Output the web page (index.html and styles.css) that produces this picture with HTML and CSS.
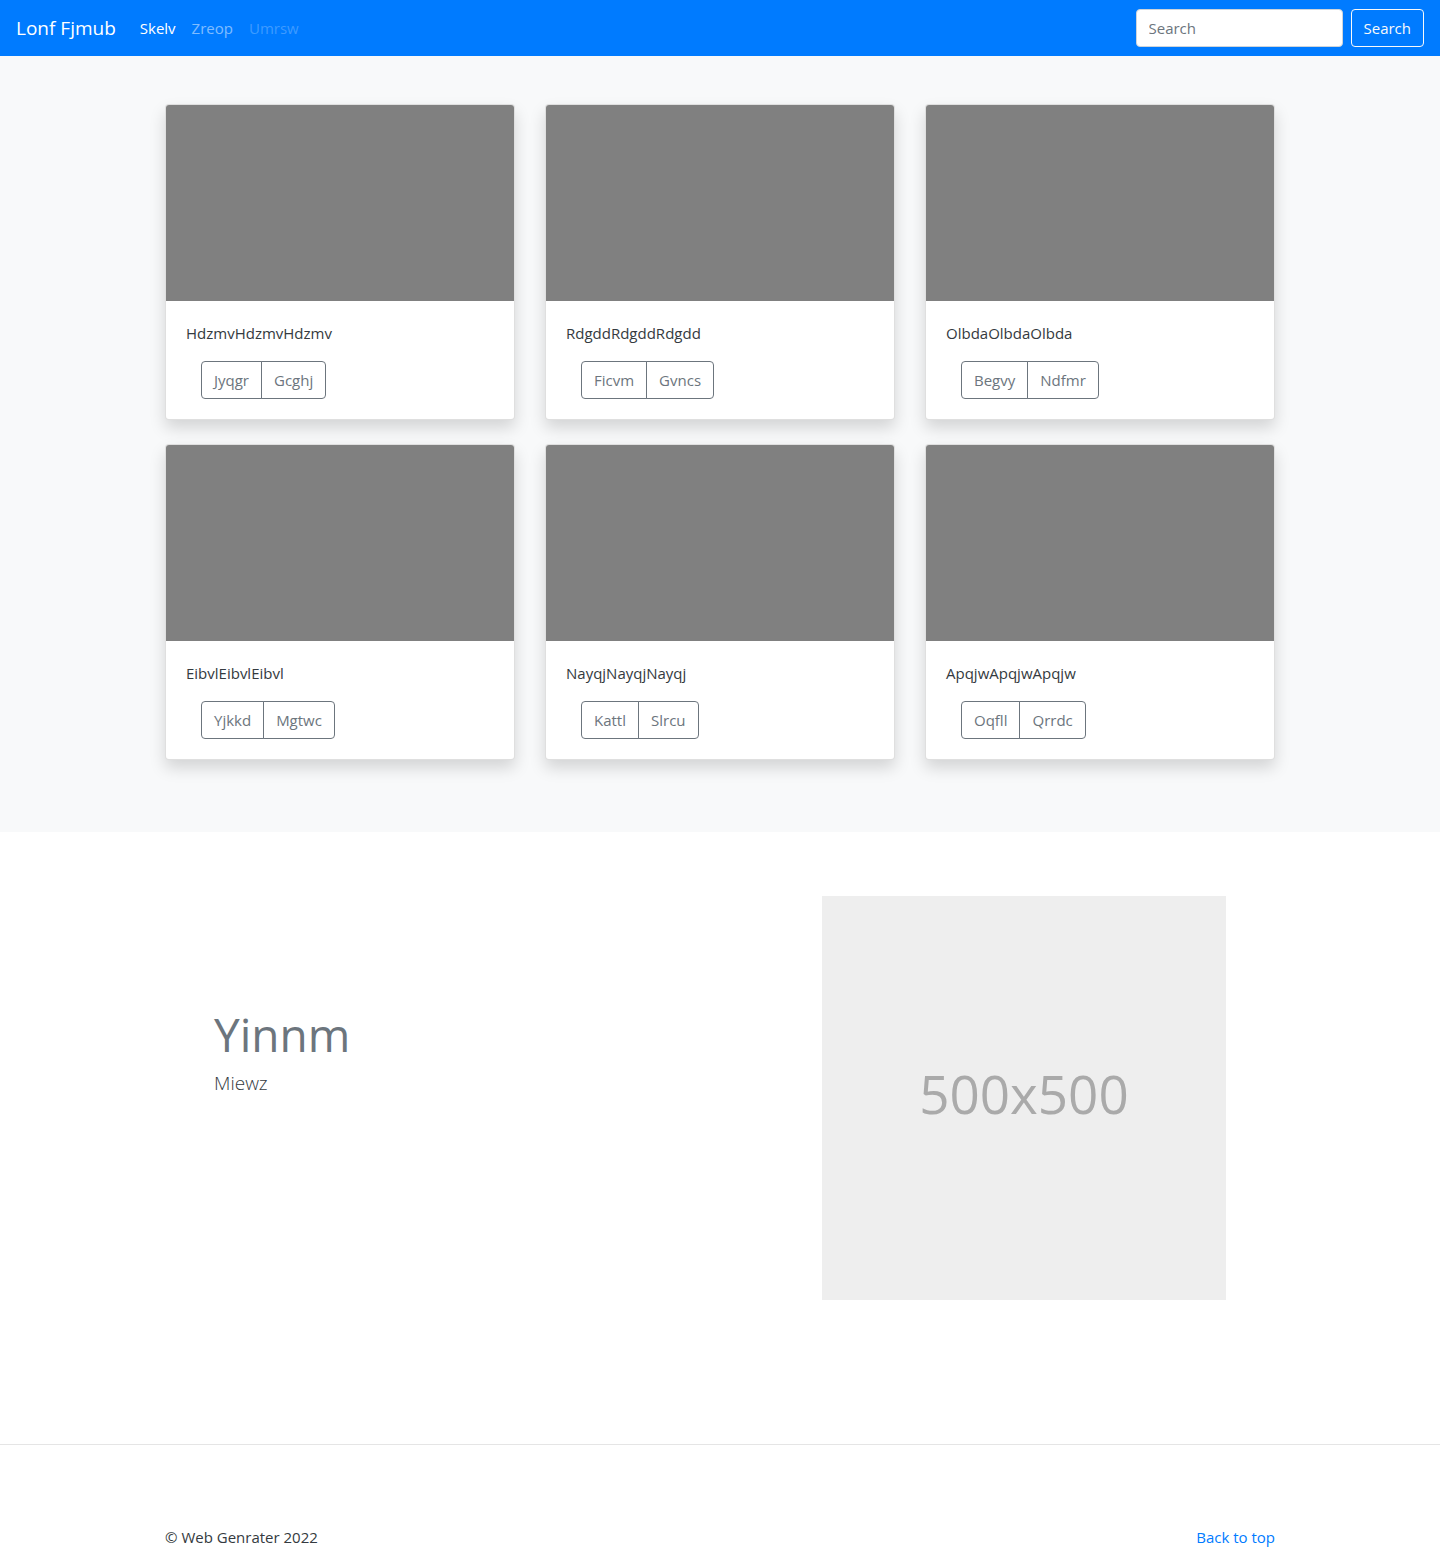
FILE: index.html
```html
<!DOCTYPE html>
<html lang="en">
<head>
<meta charset="utf-8">
<meta name="viewport" content="width=device-width, initial-scale=1">
<title>Lonf Fjmub</title>
<link rel="stylesheet" href="styles.css">
</head>
<body>
<header>
  <nav class="navbar">
    <a class="brand" href="#">Lonf Fjmub</a>
    <ul class="nav-list">
      <li><a class="nav-link active" href="#">Skelv</a></li>
      <li><a class="nav-link" href="#">Zreop</a></li>
      <li><a class="nav-link disabled" href="#" aria-disabled="true">Umrsw</a></li>
    </ul>
    <form class="search">
      <input class="search-input" type="search" placeholder="Search" aria-label="Search">
      <button class="btn btn-light" type="submit">Search</button>
    </form>
  </nav>
</header>
<main>
  <section class="album">
    <div class="container card-grid">
      <article class="card">
        <div class="card-image"></div>
        <div class="card-body">
          <p class="card-text">HdzmvHdzmvHdzmv</p>
          <div class="btn-group"><button class="btn" type="button">Jyqgr</button><button class="btn" type="button">Gcghj</button></div>
        </div>
      </article>
      <article class="card">
        <div class="card-image"></div>
        <div class="card-body">
          <p class="card-text">RdgddRdgddRdgdd</p>
          <div class="btn-group"><button class="btn" type="button">Ficvm</button><button class="btn" type="button">Gvncs</button></div>
        </div>
      </article>
      <article class="card">
        <div class="card-image"></div>
        <div class="card-body">
          <p class="card-text">OlbdaOlbdaOlbda</p>
          <div class="btn-group"><button class="btn" type="button">Begvy</button><button class="btn" type="button">Ndfmr</button></div>
        </div>
      </article>
      <article class="card">
        <div class="card-image"></div>
        <div class="card-body">
          <p class="card-text">EibvlEibvlEibvl</p>
          <div class="btn-group"><button class="btn" type="button">Yjkkd</button><button class="btn" type="button">Mgtwc</button></div>
        </div>
      </article>
      <article class="card">
        <div class="card-image"></div>
        <div class="card-body">
          <p class="card-text">NayqjNayqjNayqj</p>
          <div class="btn-group"><button class="btn" type="button">Kattl</button><button class="btn" type="button">Slrcu</button></div>
        </div>
      </article>
      <article class="card">
        <div class="card-image"></div>
        <div class="card-body">
          <p class="card-text">ApqjwApqjwApqjw</p>
          <div class="btn-group"><button class="btn" type="button">Oqfll</button><button class="btn" type="button">Qrrdc</button></div>
        </div>
      </article>
    </div>
  </section>
  <section class="feature">
    <div class="feature-row">
      <div class="feature-text">
        <h2 class="feature-title">Yinnm</h2>
        <p class="lead">Miewz</p>
      </div>
      <div class="feature-media">
        <div class="placeholder">500x500</div>
      </div>
    </div>
  </section>
</main>
<hr class="divider">
<footer class="container footer">
  <span>© Web Genrater 2022</span>
  <a href="#">Back to top</a>
</footer>
</body>
</html>
```
FILE: styles.css
```css
*, *::before, *::after { box-sizing: border-box; }

body {
  margin: 0;
  background: #fff;
  color: #343a40;
  font-family: "Open Sans", "Noto Sans", sans-serif;
  font-size: 15px;
  line-height: 24px;
}

a { color: #007bff; text-decoration: none; }

.container {
  width: 100%;
  max-width: 1140px;
  margin: 0 auto;
  padding: 0 15px;
}

/* Navigation bar */
.navbar {
  display: flex;
  align-items: center;
  min-height: 56px;
  padding: 8px 16px;
  background: #007bff;
}
.brand {
  margin-right: 16px;
  color: #fff;
  font-size: 19px;
  line-height: 30px;
}
.nav-list {
  display: flex;
  flex: 1;
  margin: 0;
  padding: 0;
  list-style: none;
}
.nav-link {
  display: block;
  padding: 8px;
  color: rgba(255, 255, 255, .5);
}
.nav-link.active { color: #fff; }
.nav-link.disabled { color: rgba(255, 255, 255, .25); }

.search { display: flex; gap: 8px; }
.search-input {
  width: 207px;
  height: 38px;
  padding: 6px 12px;
  border: 1px solid #ced4da;
  border-radius: 4px;
  background: #fff;
  color: #495057;
  font: inherit;
}
.search-input::placeholder { color: #6c757d; opacity: 1; }

.btn {
  height: 38px;
  padding: 6px 12px;
  border: 1px solid #6c757d;
  border-radius: 4px;
  background: transparent;
  color: #6c757d;
  font: inherit;
  cursor: pointer;
}
.btn-light { border-color: #f8f9fa; color: #f8f9fa; }

/* Card album */
.album { padding: 48px 0 72px; background: #f8f9fa; }
.card-grid {
  display: grid;
  grid-template-columns: repeat(3, 1fr);
  gap: 24px 30px;
}
.card {
  border: 1px solid rgba(0, 0, 0, .125);
  border-radius: 4px;
  background: #fff;
  box-shadow: 0 8px 16px rgba(0, 0, 0, .15);
}
.card-image {
  height: 196px;
  border-radius: 3px 3px 0 0;
  background: #808080;
}
.card-body { padding: 20px; }
.card-text { margin: 0 0 16px; }
.btn-group { display: flex; margin-left: 15px; }
.btn-group .btn:first-child { border-radius: 4px 0 0 4px; }
.btn-group .btn:last-child { margin-left: -1px; border-radius: 0 4px 4px 0; }

/* Feature */
.feature { max-width: 1140px; margin: 0 auto; padding: 64px; }
.feature-row { display: flex; margin: 0 -15px; }
.feature-text { flex: 1; padding: 112px 15px 0; }
.feature-media { flex: 0 0 calc(100% * 5 / 12); padding: 0 15px; }
.feature-title {
  margin: 0 0 8px;
  color: #6c757d;
  font-size: 46px;
  font-weight: 400;
  line-height: 52px;
}
.lead { margin: 0; font-size: 19px; font-weight: 300; line-height: 30px; }
.placeholder {
  display: flex;
  align-items: center;
  justify-content: center;
  aspect-ratio: 1;
  padding-bottom: 8px;
  background: #eee;
  color: #aaa;
  font-size: 53px;
}

/* Footer */
.divider { margin: 80px 0; border: 0; border-top: 1px solid rgba(0, 0, 0, .1); }
.footer { display: flex; justify-content: space-between; }
```
